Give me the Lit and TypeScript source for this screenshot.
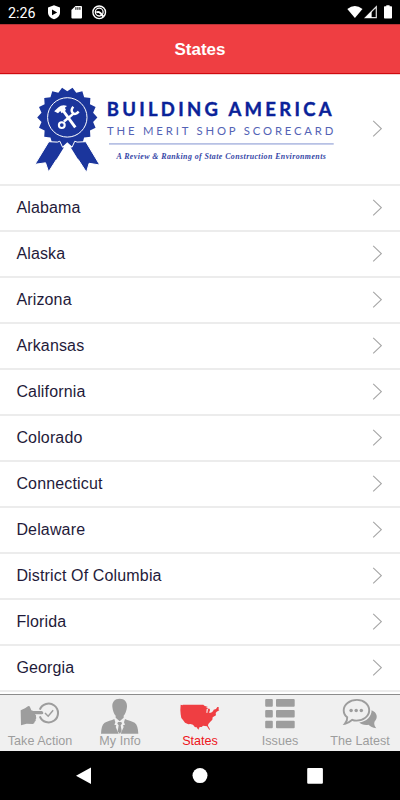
import { LitElement, html, css, svg } from "lit";
import { customElement, property } from "lit/decorators.js";

const STATES = ["Alabama", "Alaska", "Arizona", "Arkansas", "California", "Colorado", "Connecticut", "Delaware", "District Of Columbia", "Florida", "Georgia"];

// Toothed seal outline, with a valley at twelve o'clock.
const rosette = (cx: number, cy: number, outer: number, inner: number, n: number) =>
  Array.from({ length: n * 2 }, (_, i) => {
    const a = (Math.PI * i) / n - Math.PI / 2;
    const r = i % 2 ? outer : inner;
    return `${(cx + r * Math.cos(a)).toFixed(2)},${(cy + r * Math.sin(a)).toFixed(2)}`;
  }).join(" ");

const chevron = html`<svg width="10" height="18" viewBox="0 0 10 18" fill="none" stroke="#a6a6a6" stroke-width="1.1"><path d="M1.2.9 9.3 8.6 1.2 16.3"/></svg>`;

const tabIcons: Record<string, unknown> = {
  "Take Action": svg`<g transform="translate(0 685) scale(.33333)">
    <path d="M62 76 75 70 84 64Q88 62 90 66L94 76 100 78H125Q130 80 130 84T125 88H105Q110 91 108 96 111 99 107 103 109 108 104 110 104 116 98 117L80 116 63 121Z"/>
    <path fill="none" stroke="currentColor" stroke-width="6.2" d="M119.5 74A28.2 28.2 0 1 1 119.5 94"/>
    <path fill="none" stroke="currentColor" stroke-width="4.5" d="M135 84 144.5 93.5 159.5 75.5"/></g>`,
  "My Info": svg`<g transform="translate(0 685) scale(.33333)">
    <path d="M359 41C374 41 382 51 381 65 380 77 376 87 371 92V98L359 109 347 98V92C342 87 338 77 337 65 336 51 344 41 359 41Z"/>
    <path d="M343 102 346 112 343 119 349 121 347 126 356 146H303C304 130 306 119 314 113 322 108 335 107 343 102ZM375 102 372 112 375 119 369 121 371 126 362 146H415C414 130 412 119 404 113 396 108 383 107 375 102Z"/>
    <path d="M354 111H364L366 116 362 121 365 139 359 146 353 139 356 121 352 116Z"/></g>`,
  States: svg`<path transform="translate(160 685) scale(.33333)" d="M62 59 68 61V59H130L133 62 144 66 137 69 147 69 140 72 139 83 142 84 144 72 149 71 150 76 147 83 153 83 159 79 161 74 168 72 172 66 176 66V74L178 76 170 80 167 84 168 91 158 97 157 104 151 110 145 117 144 122 150 133 148 135 141 124 129 122 125 126 119 126 115 134 109 126 105 127 99 119 91 117 85 118 75 113 69 105 64 99 62 88 61 75Z"/>`,
  Issues: svg`<g><rect x="265.2" y="699" width="7.6" height="7.8" rx="1"/><rect x="276" y="699" width="18.7" height="7.8" rx="1"/><rect x="265.2" y="710" width="7.6" height="7.5" rx="1"/><rect x="276" y="710" width="18.7" height="7.5" rx="1"/><rect x="265.2" y="720.8" width="7.6" height="7.5" rx="1"/><rect x="276" y="720.8" width="18.7" height="7.5" rx="1"/></g>`,
  "The Latest": svg`<g>
    <path d="M371.6 710.3C377 712.5 378.5 717.5 374.5 721.8 373.7 724 374.8 726.5 376.3 728.3 372.5 727.8 370.5 726.5 368.5 724.8 364.5 725.5 361 724.2 359.3 722.5 366.5 721.5 371.5 717 371.6 710.3Z"/>
    <path fill="none" stroke="currentColor" stroke-width="1.9" d="M357 699.9C364 699.9 369.2 704.5 369.2 710.3S363.5 720.6 356.5 720.6C355 720.6 353.5 720.4 352.3 719.8 349.8 722 347.7 723.3 345 723.7 346.8 721.5 347.4 719.5 347.2 717.3 344.8 715.5 343.7 713 343.7 710.3 343.7 704.5 349.5 699.9 357 699.9Z"/>
    <circle cx="351.1" cy="710.5" r="1.75"/><circle cx="356.2" cy="710.5" r="1.75"/><circle cx="361.3" cy="710.5" r="1.75"/></g>`,
};

@customElement("status-bar")
class StatusBar extends LitElement {
  static styles = css`
    :host { display: flex; height: 24px; background: #000; }
    svg { display: block; }
    text { font: 14.2px Roboto, sans-serif; }
  `;
  render() {
    return html`<svg width="400" height="24" viewBox="0 0 400 24" fill="#fff">
      <text x="8" y="17.6" textLength="27.5" lengthAdjust="spacingAndGlyphs">2:26</text>
      <path d="M54 5.2 60 7.6V12.5C60 15.8 57.5 18.3 54 19.2 50.5 18.3 48 15.8 48 12.5V7.6Z"/><path fill="#000" d="M52 9.6 57.2 12.4 52 15.2Z"/>
      <path d="M75.5 6H81Q82 6 82 7V17.6Q82 18.6 81 18.6H72.4Q71.4 18.6 71.4 17.6V10Z"/><path stroke="#000" stroke-width="1" d="M75.9 7.2V9.8M77.9 7.2V9.8M79.9 7.2V9.8"/>
      <g fill="none" stroke="#fff"><circle cx="99.2" cy="12.3" r="6.3" stroke-width="1.4"/><circle cx="99.2" cy="12.1" r="3.9" stroke-width="1.3"/><path stroke-width="2" d="M96.3 12.5Q99 10.6 101.7 14.6L103.3 16.5"/></g>
      <path d="M347.3 8.9Q354.9 3 362.5 8.9L354.9 18Z"/>
      <path fill="none" stroke="#ddd" stroke-width="1.2" d="M376.3 6.8V17.7H365.4Z"/><path d="M371.6 11.2V18H365Z"/>
      <path d="M384.7 6.3H386.3V5.2H389.6V6.3H391.2Q392 6.3 392 7.1V17.8Q392 18.6 391.2 18.6H384.7Q384 18.6 384 17.8V7.1Q384 6.3 384.7 6.3Z"/>
    </svg>`;
  }
}

@customElement("scorecard-banner")
class ScorecardBanner extends LitElement {
  static styles = css`
    :host { display: block; width: 310px; height: 108px; }
    svg { display: block; }
    .title { font: 700 18.5px Lato, sans-serif; fill: #0a2299; stroke: #0a2299; stroke-width: .4px; }
    .sub { font: 400 11.3px Lato, sans-serif; fill: #5363b5; }
    .tag { font: italic 700 7.9px "Liberation Serif", serif; fill: #3446a6; }
  `;
  render() {
    return html`<svg width="310" height="108" viewBox="30 75 310 108">
      <polygon fill="#1b359c" points=${rosette(67.3, 117.4, 30.1, 26.2, 18)}/>
      <path fill="#1b359c" stroke="#fff" stroke-width="1" d="M48.8 141.7 57.5 142.1 59.8 141.2 62.5 147 64.7 146.6 48.6 171.8 45.5 162.8 35 164.3ZM85.8 141.7 77.1 142.1 74.8 141.2 72.1 147 69.9 146.6 86.5 172.3 89.1 163.3 99.8 165Z"/>
      <path fill="#fff" d="M67.3 142.2 71.3 146 75 154H59.6L63.3 146Z"/>
      <path fill="#1b359c" d="M57 150 64 147.3 56 160ZM77.6 150 70.6 147.3 78.6 160Z"/>
      <circle cx="67.3" cy="117.4" r="19.7" fill="none" stroke="#fff" stroke-width="1"/>
      <g fill="none" stroke="#fff">
        <path stroke-width="2.9" d="M63 110.5 75.3 127.3"/>
        <path stroke-width="2.5" d="M73.5 113.6 64 121.5"/>
        <circle cx="61.8" cy="125.1" r="2.9" stroke-width="2.1"/>
        <path stroke-width="2.4" d="M73.3 106.8Q70.3 110.3 72.7 112.9T78.7 111.6"/>
      </g>
      <path fill="#fff" d="M54.2 111.2 58.2 107.4Q62 104.2 67 105.9L64.9 107.7 66 110 61.6 113.2 60.3 111 58 113.2Z"/>
      <text class="title" x="106.7" y="116" textLength="225">BUILDING AMERICA</text>
      <text class="sub" x="107" y="134.8" textLength="226.5">THE MERIT SHOP SCORECARD</text>
      <path stroke="#b7c1e4" stroke-width="1.7" d="M109 143.8H333.7"/>
      <text class="tag" x="116.5" y="158.9" textLength="209.5">A Review &amp; Ranking of State Construction Environments</text>
    </svg>`;
  }
}

@customElement("tab-item")
class TabItem extends LitElement {
  @property() label = "";
  @property({ type: Number }) index = 0;
  static styles = css`
    :host { flex: 1; display: flex; flex-direction: column; align-items: center; color: #9d9d9d; }
    :host([active]) { color: #ef3e42; }
    svg { display: block; fill: currentColor; }
    .label { font: 12.6px/16px "Liberation Sans", sans-serif; margin-top: -1px; white-space: nowrap; }
    :host([active]) .label { color: #ee1520; }
  `;
  render() {
    return html`<svg width="80" height="39" viewBox="${this.index * 80} 695 80 39">${tabIcons[this.label]}</svg><span class="label">${this.label}</span>`;
  }
}

@customElement("app-root")
class AppRoot extends LitElement {
  static styles = css`
    :host { display: flex; flex-direction: column; width: 400px; height: 800px; overflow: hidden; background: #fff; font-family: "Liberation Sans", Arial, sans-serif; }
    * { box-sizing: border-box; }
    header { height: 50px; flex: none; background: #ef3e42; border-top: 1px solid #b93338; border-bottom: 1px solid #cf0a10; color: #fff; font-weight: 700; font-size: 17px; line-height: 49px; text-align: center; }
    main { height: 620px; flex: none; overflow: hidden; border-top: 1px solid #f3d3d4; }
    .row { display: flex; align-items: center; justify-content: space-between; height: 46px; padding: 0 18px 0 16.4px; border-bottom: 2px solid #ececec; color: #1f1b3a; font-size: 16px; letter-spacing: .15px; }
    .row.banner { height: 111px; padding-left: 30px; padding-bottom: 1px; }
    .row svg { display: block; flex: none; }
    .tabs { display: flex; height: 57px; flex: none; background: #f0f0f0; border-top: 1px solid #8c8c8c; }
    .nav { display: flex; flex: 1; background: #000; }
  `;
  render() {
    return html`
      <status-bar></status-bar>
      <header>States</header>
      <main>
        <div class="row banner"><scorecard-banner></scorecard-banner>${chevron}</div>
        ${STATES.map((s) => html`<div class="row"><span>${s}</span>${chevron}</div>`)}
      </main>
      <div class="tabs">
        ${Object.keys(tabIcons).map((t, i) => html`<tab-item label=${t} index=${i} ?active=${t === "States"}></tab-item>`)}
      </div>
      <div class="nav"><svg width="400" height="49" viewBox="0 751 400 49" fill="#fff"><path d="M76 775.7 91 767.5V784Z"/><circle cx="200" cy="775.6" r="7.5"/><rect x="307.2" y="768" width="15.7" height="15.7" rx="1"/></svg></div>
    `;
  }
}
